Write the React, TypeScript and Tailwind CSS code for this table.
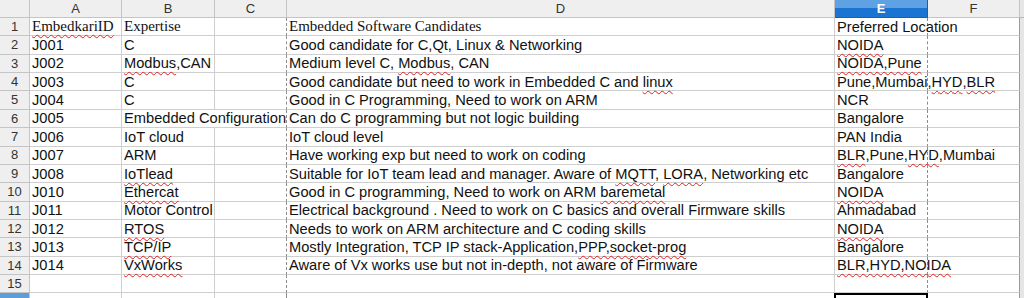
import React from 'react';

// Spreadsheet snapshot. Words wrapped in ~ ~ get the red spell-check squiggle.
type Row = { a: string; b: string; d: string; e: string; serif?: boolean; bOverflow?: boolean };

const rows: Row[] = [
  { a: '~EmbedkariID~', b: 'Expertise', d: 'Embedded Software Candidates', e: 'Preferred Location', serif: true },
  { a: 'J001', b: 'C', d: 'Good candidate for C,Qt, Linux & Networking', e: '~NOIDA~' },
  { a: 'J002', b: '~Modbus~,CAN', d: 'Medium level C, ~Modbus~, CAN', e: '~NOIDA,Pune~' },
  { a: 'J003', b: 'C', d: 'Good candidate but need to work in Embedded C and ~linux~', e: 'Pune,Mumbai,~HYD~,~BLR~' },
  { a: 'J004', b: 'C', d: 'Good in C Programming, Need to work on ARM', e: 'NCR' },
  { a: 'J005', b: 'Embedded Configuration', d: 'Can do C programming but not logic building', e: 'Bangalore', bOverflow: true },
  { a: 'J006', b: 'IoT cloud', d: 'IoT cloud level', e: 'PAN India' },
  { a: 'J007', b: 'ARM', d: 'Have working exp but need to work on coding', e: '~BLR~,Pune,~HYD~,Mumbai' },
  { a: 'J008', b: '~IoTlead~', d: 'Suitable for IoT team lead and manager. Aware of ~MQTT~, ~LORA~, Networking etc', e: 'Bangalore' },
  { a: 'J010', b: '~Ethercat~', d: 'Good in C programming, Need to work on ARM ~baremetal~', e: '~NOIDA~' },
  { a: 'J011', b: 'Motor Control', d: 'Electrical background . Need to work on C basics and overall Firmware skills', e: 'Ahmadabad' },
  { a: 'J012', b: '~RTOS~', d: 'Needs to work on ARM architecture and C coding skills', e: '~NOIDA~' },
  { a: 'J013', b: '~TCP/IP~', d: 'Mostly Integration, TCP IP stack-Application,~PPP,socket-prog~', e: 'Bangalore' },
  { a: 'J014', b: '~VxWorks~', d: 'Aware of Vx works use but not in-depth, not aware of Firmware', e: '~BLR,HYD,NOIDA~' },
  { a: '', b: '', d: '', e: '' },
];

const Text: React.FC<{ value: string }> = ({ value }) => (
  <span>
    {value.split('~').map((part, i) =>
      i % 2 === 1 ? (
        <span key={i} className="underline decoration-wavy decoration-[#e02020] decoration-1 underline-offset-[3px]">
          {part}
        </span>
      ) : (
        <React.Fragment key={i}>{part}</React.Fragment>
      )
    )}
  </span>
);

const cellBase = 'h-[18.37px] border-b border-[#cfcfcf] flex items-center pl-[2px] whitespace-nowrap overflow-visible text-[#111]';
const pageBreak = 'border-r border-r-[#8c8c8c] [border-right-style:dashed]';
const headBase = 'h-[18px] bg-[#efefef] border-b border-r border-[#c4c4c4] flex items-center justify-center text-[13px] text-[#333]';

export default function App() {
  const colLetters = ['A', 'B', 'C', 'D', 'E', 'F'];

  return (
    <div className="w-[1024px] h-[298px] overflow-hidden bg-white" style={{ fontFamily: '"Liberation Sans", Arial, sans-serif' }}>
      <div className="grid grid-cols-[30px_92px_93px_72px_548px_93px_92px_4px]">
        {/* column headers */}
        <div className={headBase} />
        {colLetters.map(l =>
          l === 'E' ? (
            <div
              key={l}
              className="h-[18px] border-b border-r border-[#1a5fae] bg-[linear-gradient(#5ea2e4_45%,#1b74d2_45%)] flex items-center justify-center text-[13px] font-bold text-white"
            >
              {l}
            </div>
          ) : (
            <div key={l} className={headBase}>
              {l}
            </div>
          )
        )}
        <div className="h-[18px] bg-[#e6e6e6] border-b border-[#b8b8b8]" />

        {rows.map((r, i) => {
          const serif = r.serif ? { fontFamily: '"Liberation Serif", "Times New Roman", serif' } : undefined;
          const size = r.serif ? 'text-[15px]' : 'text-[14.67px]';
          return (
            <React.Fragment key={i}>
              <div className="h-[18.37px] bg-[#efefef] border-b border-r border-[#c4c4c4] flex items-center justify-center text-[13px] text-[#333]">
                {i + 1}
              </div>
              <div className={`${cellBase} ${size} border-r`} style={serif}>
                <Text value={r.a} />
              </div>
              <div className={`${cellBase} ${size} relative z-10 ${r.bOverflow ? '' : 'border-r'}`} style={serif}>
                <Text value={r.b} />
              </div>
              <div className={`${cellBase} ${pageBreak}`} />
              <div className={`${cellBase} ${size} border-r`} style={serif}>
                <Text value={r.d} />
              </div>
              <div className={`${cellBase} text-[14.67px] relative ${pageBreak}`}>
                <Text value={r.e} />
              </div>
              <div className={`${cellBase} border-r border-r-[#9a9a9a]`} />
              <div className="h-[18.37px] bg-[#e6e6e6]" />
            </React.Fragment>
          );
        })}

        {/* row 16, cut off by the window edge */}
        <div className="h-[6px] bg-[#5c9ddc] border-r border-[#c4c4c4]" />
        <div className="h-[6px] border-r border-[#cfcfcf]" />
        <div className="h-[6px] border-r border-[#cfcfcf]" />
        <div className={`h-[6px] ${pageBreak}`} />
        <div className="h-[6px]" />
        <div className="h-[6px] border-2 border-b-0 border-black -ml-[1px]" />
        <div className="h-[6px] border-r border-[#9a9a9a]" />
        <div className="h-[6px] bg-[#e6e6e6]" />
      </div>
    </div>
  );
}
